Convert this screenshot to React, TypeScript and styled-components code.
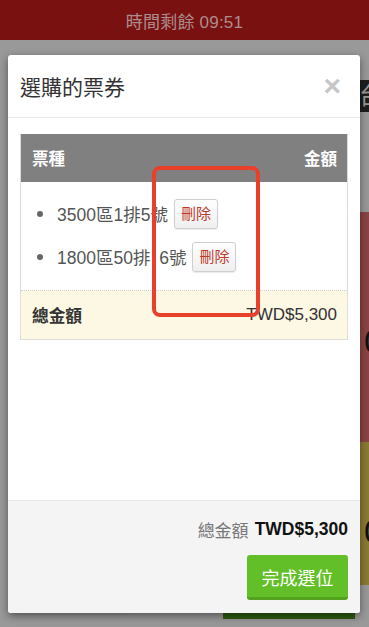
import React from "react";
import styled, { createGlobalStyle } from "styled-components";

const Global = createGlobalStyle`
  html, body { margin: 0; padding: 0; }
  body {
    width: 369px;
    height: 627px;
    overflow: hidden;
    background: #999;
    font-family: "Liberation Sans", "Noto Sans CJK TC", sans-serif;
  }
  * { box-sizing: border-box; }
`;

const Page = styled.div`
  position: relative;
  width: 369px;
  height: 627px;
  overflow: hidden;
  display: flex;
  flex-direction: column;
  background: #999;
`;

const TimerBar = styled.div`
  height: 40px;
  flex: none;
  background: #7a1111;
  color: #ac8e8e;
  font-size: 17px;
  display: flex;
  align-items: center;
  justify-content: center;
  letter-spacing: 0.2px;
`;

/* underlying page content (dimmed by the backdrop) */
const Under = styled.div`
  flex: 1;
  display: flex;
  flex-direction: column;
  align-items: flex-end;
`;

const Spacer = styled.div<{ $h: number }>`
  height: ${(p) => p.$h}px;
  flex: none;
`;

const Block = styled.div<{ $h: number; $bg: string }>`
  width: 40px;
  height: ${(p) => p.$h}px;
  flex: none;
  background: ${(p) => p.$bg};
  display: flex;
  justify-content: flex-end;
  overflow: hidden;
`;

const DarkGlyph = styled.span`
  color: #9a9a9a;
  font-size: 24px;
  line-height: 1;
  margin-top: 4px;
  margin-right: -14px;
`;

const ZeroGlyph = styled.span<{ $top: number }>`
  color: #111;
  font-size: 34px;
  line-height: 1;
  margin-top: ${(p) => p.$top}px;
  margin-right: -14px;
`;

const BottomRow = styled.div`
  align-self: stretch;
  display: flex;
  justify-content: space-between;
  padding: 0 14px 0 13px;
  height: 34px;
  flex: none;
`;

const GhostBtn = styled.div`
  width: 117px;
  height: 30px;
  background: #959595;
`;

const GreenBtn = styled.div`
  width: 132px;
  height: 34px;
  background: #2e5c13;
`;

/* modal */
const Modal = styled.div`
  position: absolute;
  left: 8px;
  top: 55px;
  width: 352px;
  height: 558px;
  background: #fff;
  border-radius: 3px;
  box-shadow: 0 3px 9px rgba(0, 0, 0, 0.45);
  display: flex;
  flex-direction: column;
  overflow: hidden;
`;

const Header = styled.div`
  height: 63px;
  flex: none;
  border-bottom: 1px solid #e5e5e5;
  display: flex;
  align-items: center;
  justify-content: space-between;
  padding: 0 19px 1px 12px;
`;

const Title = styled.h4`
  margin: 0;
  font-size: 21px;
  font-weight: normal;
  color: #333;
`;

const Close = styled.span`
  font-size: 30px;
  font-weight: bold;
  color: #c6c6c6;
  line-height: 1;
  font-family: "Liberation Sans", sans-serif;
`;

const Body = styled.div`
  flex: 1;
  padding: 16px 12px;
`;

const Table = styled.div`
  border: 1px solid #dddddd;
  border-top: none;
`;

const THead = styled.div`
  height: 48px;
  background: #808080;
  color: #fff;
  font-weight: bold;
  font-size: 16.5px;
  display: flex;
  align-items: center;
  justify-content: space-between;
  padding: 0 10px 0 11px;
`;

const List = styled.ul`
  margin: 0;
  padding: 10px 0 12px 0;
  list-style: none;
`;

const Item = styled.li`
  height: 43px;
  display: flex;
  align-items: center;
  padding-left: 16px;
  color: #555;
  font-size: 17.5px;
  white-space: pre;
  &::before {
    content: "";
    width: 6px;
    height: 6px;
    border-radius: 50%;
    background: #666;
    margin-right: 14px;
    flex: none;
  }
`;

const DelBtn = styled.button`
  margin-left: 6px;
  height: 30px;
  padding: 0 6px;
  border: 1px solid #cfcfcf;
  border-radius: 3px;
  background: linear-gradient(#ffffff, #efefef);
  box-shadow: 0 1px 1px rgba(0, 0, 0, 0.08);
  color: #c0392b;
  font-family: inherit;
  font-size: 15px;
  line-height: 1;
`;

const TotalRow = styled.div`
  height: 49px;
  background: #fcf8e3;
  border-top: 1px dotted #cccccc;
  display: flex;
  align-items: center;
  justify-content: space-between;
  padding: 0 10px 0 11px;
  color: #333;
  font-size: 17px;
`;

const TotalLabel = styled.span`
  font-weight: bold;
  font-size: 16.7px;
`;

const Footer = styled.div`
  height: 113px;
  flex: none;
  background: #f4f4f4;
  border-top: 1px solid #e5e5e5;
  padding: 15px 12px 13px;
  display: flex;
  flex-direction: column;
  align-items: flex-end;
  gap: 13px;
`;

const Sum = styled.div`
  height: 26px;
  display: flex;
  align-items: center;
  font-size: 17px;
  color: #777;
`;

const SumValue = styled.b`
  color: #111;
  margin-left: 6px;
  font-size: 17.5px;
`;

const Done = styled.button`
  width: 101px;
  height: 45px;
  border: none;
  border-bottom: 3px solid #53a21f;
  border-radius: 3px;
  background: #63bf28;
  color: #fff;
  font-family: inherit;
  font-size: 18px;
  padding: 2px 0 0;
`;

const Annotation = styled.div`
  position: absolute;
  left: 152px;
  top: 166px;
  width: 108px;
  height: 151px;
  border: 4.5px solid #e8402a;
  border-radius: 8px;
  pointer-events: none;
`;

export default function App() {
  return (
    <>
      <Global />
      <Page>
        <TimerBar>時間剩餘 09:51</TimerBar>
        <Under>
          <Spacer $h={40} />
          <Block $h={32} $bg="#1e1e1e">
            <DarkGlyph>台</DarkGlyph>
          </Block>
          <Spacer $h={100} />
          <Block $h={230} $bg="#8a4444">
            <ZeroGlyph $top={112}>0</ZeroGlyph>
          </Block>
          <Block $h={143} $bg="#8a7a34">
            <ZeroGlyph $top={72}>0</ZeroGlyph>
          </Block>
          <BottomRow>
            <GhostBtn />
            <GreenBtn />
          </BottomRow>
        </Under>

        <Modal>
          <Header>
            <Title>選購的票券</Title>
            <Close>×</Close>
          </Header>
          <Body>
            <Table>
              <THead>
                <span>票種</span>
                <span>金額</span>
              </THead>
              <List>
                <Item>
                  3500區1排5號<DelBtn>刪除</DelBtn>
                </Item>
                <Item>
                  {"1800區50排\u20026號"}
                  <DelBtn>刪除</DelBtn>
                </Item>
              </List>
              <TotalRow>
                <TotalLabel>總金額</TotalLabel>
                <span>TWD$5,300</span>
              </TotalRow>
            </Table>
          </Body>
          <Footer>
            <Sum>
              總金額<SumValue>TWD$5,300</SumValue>
            </Sum>
            <Done>完成選位</Done>
          </Footer>
        </Modal>

        <Annotation />
      </Page>
    </>
  );
}
